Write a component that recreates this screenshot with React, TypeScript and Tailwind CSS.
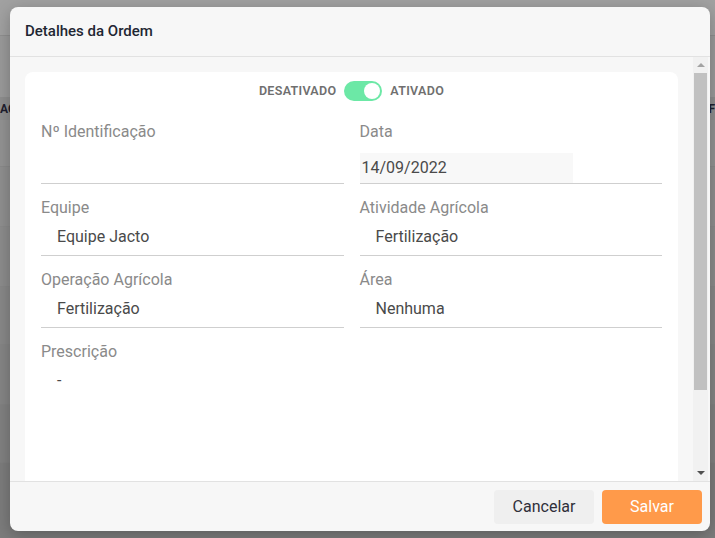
import React from "react";

type Field = {
  label: string;
  value: string;
  input?: boolean;
  noBorder?: boolean;
};

const fields: Field[] = [
  { label: "Nº Identificação", value: "" },
  { label: "Data", value: "14/09/2022", input: true },
  { label: "Equipe", value: "Equipe Jacto" },
  { label: "Atividade Agrícola", value: "Fertilização" },
  { label: "Operação Agrícola", value: "Fertilização" },
  { label: "Área", value: "Nenhuma" },
  { label: "Prescrição", value: "-", noBorder: true },
];

const FieldItem: React.FC<{ field: Field; first?: boolean }> = ({ field, first }) => (
  <div className="flex flex-col">
    <span className="h-6 leading-6 text-[16px] text-[#8a8a8a]">{field.label}</span>
    {first ? (
      <div className="mt-[9px] h-[31px] border-b border-[#cfcfcf]">
        {field.input && (
          <div className="h-[30px] w-[213px] bg-[#f8f8f8] pl-[2px] leading-[30px] text-[16px] text-[#4a4a4a]">
            {field.value}
          </div>
        )}
      </div>
    ) : (
      <div
        className={
          field.noBorder
            ? "mt-[5px] h-6 pl-4 leading-6 text-[16px] text-[#4a4a4a]"
            : "mt-[5px] h-[31px] border-b border-[#cfcfcf] pl-4 leading-6 text-[16px] text-[#4a4a4a]"
        }
      >
        {field.value}
      </div>
    )}
  </div>
);

const Backdrop: React.FC = () => (
  <div className="absolute inset-0 flex flex-col bg-[#9a9a9a]">
    <div className="h-[36px] border-b border-[#8f8f8f] bg-[#a1a1a1]" />
    <div className="h-[61px]" />
    <div className="flex h-[23px] items-center justify-between bg-[#8e8e8e] text-[12px] font-bold text-[#1e1e2e]">
      <span>AÇ</span>
      <span>F</span>
    </div>
    <div className="h-[47px] border-b border-[#8a8a8a] bg-[#939393]" />
    <div className="h-[60px] border-b border-[#8a8a8a] bg-[#8f8f8f]" />
    <div className="h-[60px] border-b border-[#878787] bg-[#8c8c8c]" />
    <div className="h-[58px] border-b border-[#858585] bg-[#888888]" />
    <div className="h-[60px] border-b border-[#828282] bg-[#858585]" />
    <div className="h-[58px] border-b border-[#7f7f7f] bg-[#818181]" />
    <div className="flex-1 bg-[#7c7c7c]" />
  </div>
);

const Scrollbar: React.FC = () => (
  <div className="flex w-[15px] flex-col items-center bg-[#f1f1f1]">
    <div className="flex h-[16px] w-full items-center justify-center">
      <div className="h-0 w-0 border-x-[4px] border-b-[4px] border-x-transparent border-b-[#a3a3a3]" />
    </div>
    <div className="h-[317px] w-[13px] bg-[#c1c1c1]" />
    <div className="flex-1" />
    <div className="flex h-[16px] w-full items-center justify-center">
      <div className="h-0 w-0 border-x-[4px] border-t-[4px] border-x-transparent border-t-[#505050]" />
    </div>
  </div>
);

export default function App() {
  return (
    <div
      className="relative h-[538px] w-[715px] overflow-hidden"
      style={{ fontFamily: "Roboto, 'Liberation Sans', sans-serif" }}
    >
      <Backdrop />
      <div className="absolute left-[10px] top-[7px] flex h-[524px] w-[700px] flex-col overflow-hidden rounded-[8px] bg-[#f7f7f7] shadow-[0_4px_16px_rgba(0,0,0,0.25)]">
        <div className="flex h-[50px] shrink-0 items-center border-b border-[#e2e2e2] px-[15px]">
          <h2 className="text-[15px] font-medium text-[#1f2733]">Detalhes da Ordem</h2>
        </div>
        <div className="flex min-h-0 flex-1 pl-[15px]">
          <div className="flex-1 overflow-hidden pr-[15px] pt-[15px]">
            <div className="h-[500px] rounded-t-[8px] bg-white px-4 pt-[9px]">
              <div className="flex h-5 items-center justify-center gap-2 text-[12.5px] font-semibold tracking-[0.3px] text-[#6f6f6f]">
                <span>DESATIVADO</span>
                <div className="flex h-5 w-[38px] items-center justify-end rounded-full bg-[#6ce8a6] pr-[2px]">
                  <div className="h-4 w-4 rounded-full bg-white" />
                </div>
                <span>ATIVADO</span>
              </div>
              <div className="mt-[19px] grid grid-cols-2 gap-x-4 gap-y-3">
                {fields.map((f, i) => (
                  <FieldItem key={f.label} field={f} first={i < 2} />
                ))}
              </div>
            </div>
          </div>
          <Scrollbar />
          <div className="w-[2px]" />
        </div>
        <div className="flex h-[50px] shrink-0 items-center justify-end gap-2 border-t border-[#e2e2e2] pr-2">
          <button className="h-[34px] w-[100px] rounded-[4px] bg-[#efefef] text-[16px] text-[#2f2f3a]">
            Cancelar
          </button>
          <button className="h-[34px] w-[100px] rounded-[4px] bg-[#ff9a4a] text-[16px] text-white">
            Salvar
          </button>
        </div>
      </div>
    </div>
  );
}
